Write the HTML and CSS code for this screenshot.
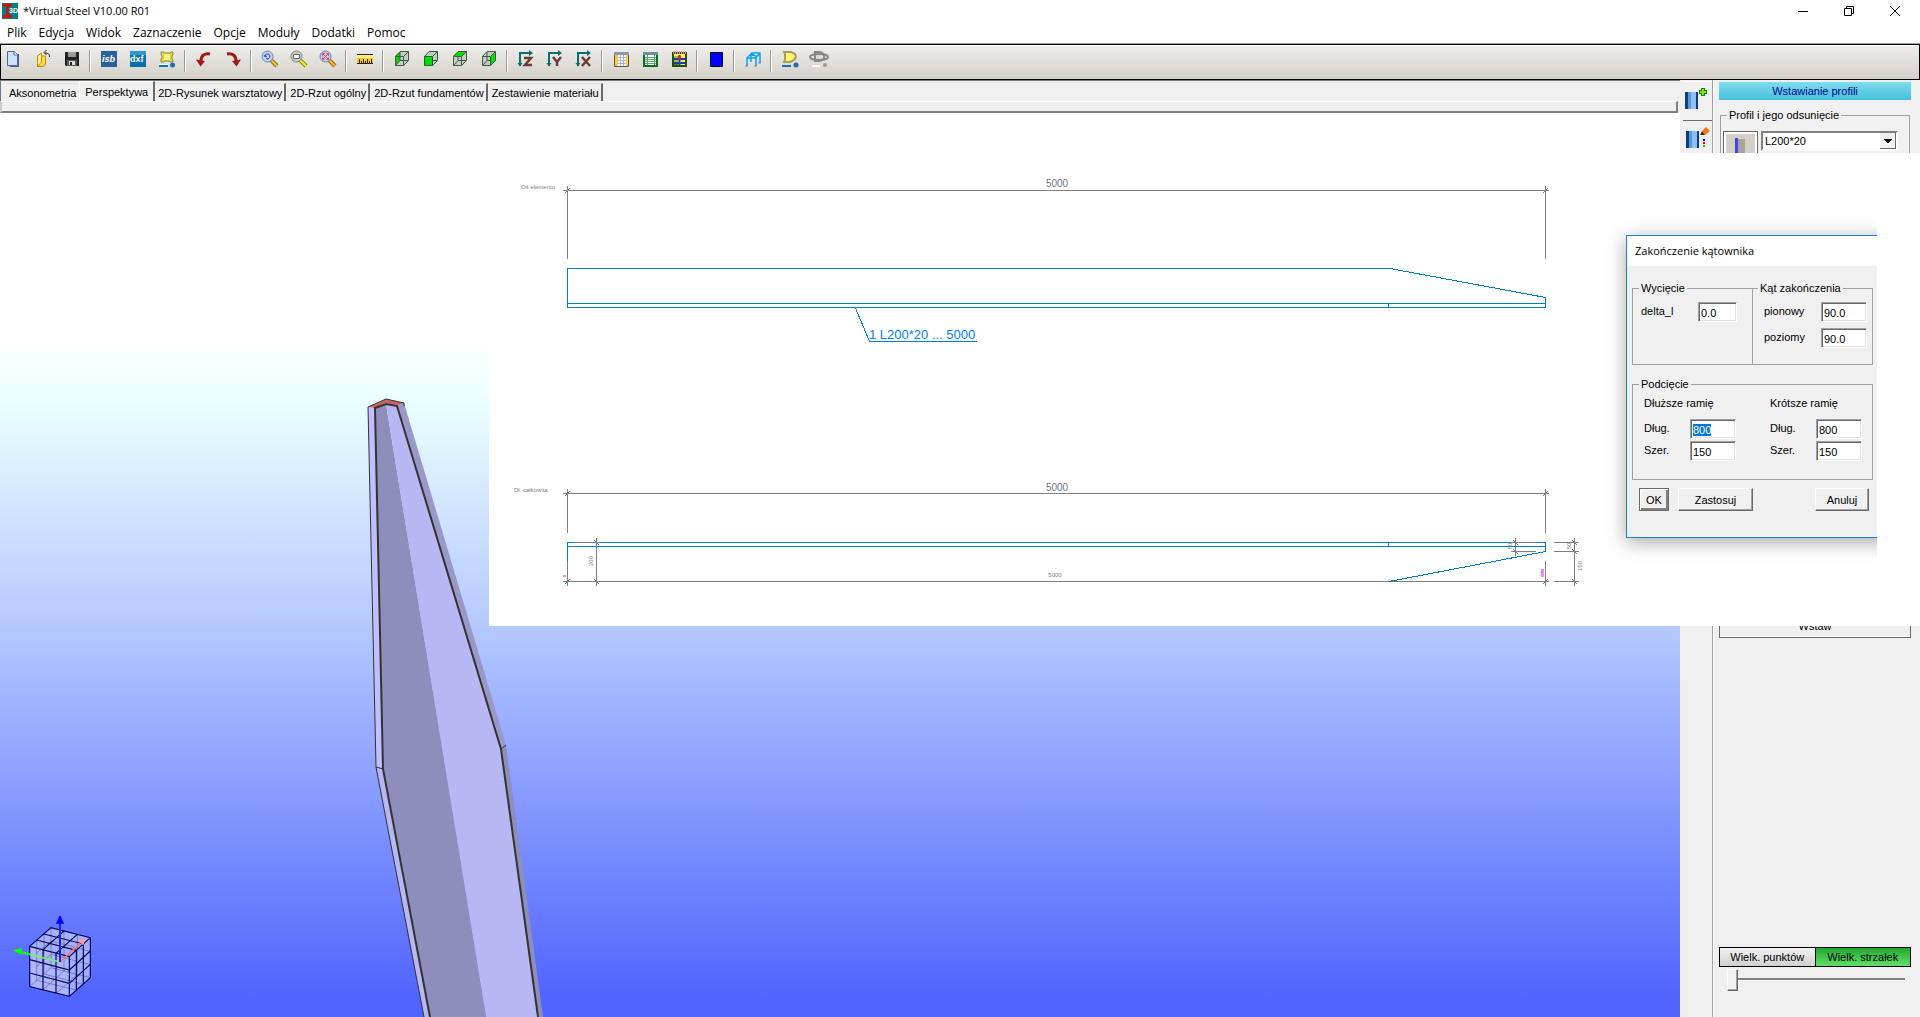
FILE: index.html
```html
<!DOCTYPE html>
<html lang="pl">
<head>
<meta charset="utf-8">
<title>*Virtual Steel V10.00 R01</title>
<link rel="stylesheet" href="styles.css">
</head>
<body>
<header class="titlebar">
  <svg class="app-icon" width="16" height="16" viewBox="0 0 16 16"><rect width="16" height="16" fill="#008080"/><path d="M1 2h9M1 13.500h9M5.500 2v11" stroke="#f00000" stroke-width="2.500"/><text x="7" y="10" class="app-mark">3D</text></svg>
  <span class="app-title">*Virtual Steel V10.00 R01</span>
  <div class="window-controls">
    <button aria-label="Minimalizuj"><svg width="10" height="10"><path d="M0 5.500h10" stroke="#000"/></svg></button>
    <button aria-label="Przywróć"><svg width="10" height="10" fill="none" stroke="#000"><path d="M.5 2.500h7v7h-7zM2.500 2.500v-2h7v7h-2"/></svg></button>
    <button aria-label="Zamknij"><svg width="10" height="10"><path d="M0 0l10 10M10 0L0 10" stroke="#000"/></svg></button>
  </div>
</header>
<nav class="menu">
  <a href="#">Plik</a><a href="#">Edycja</a><a href="#">Widok</a><a href="#">Zaznaczenie</a><a href="#">Opcje</a><a href="#">Moduły</a><a href="#">Dodatki</a><a href="#">Pomoc</a>
</nav>
<div class="toolbar">
  <button aria-label="Nowy"><svg class="ico" viewBox="0 0 20 18"><path d="M6 4h9v13H6z" fill="#555b70"/><path d="M3.500 1.500h7l3 3v11h-10z" fill="#cfe0fb" stroke="#4a68b0"/><path d="M10 1.500v3.500h3.500" fill="#fff" stroke="#4a68b0"/></svg></button>
  <button aria-label="Otwórz"><svg class="ico" viewBox="0 0 20 18"><path d="M4.500 16.500V6h8v8l-2 2.500z" fill="#ffd84a" stroke="#c58a00"/><path d="M4.500 16.500V6l4-3v9z" fill="#fff0a0" stroke="#c58a00"/><path d="M16.500 7c0-3-1-4-5-4M13.500 0l-2.500 2.500 2.500 2.500" fill="none" stroke="#222"/></svg></button>
  <button aria-label="Zapisz"><svg class="ico" viewBox="0 0 20 18"><path d="M3 2h14v14H4l-1-1z" fill="#222"/><path d="M6 2h8v5H6z" fill="#9a9a9a"/><path d="M5 10h10v6H5z" fill="#555"/><path d="M7 11h6v4H7z" fill="#ddd"/><path d="M8 12h2v3H8z" fill="#222"/></svg></button>
  <span class="sep"></span>
  <button aria-label="ISB"><svg class="ico" viewBox="0 0 20 18"><rect x="2" y="1" width="16" height="16" fill="#2c629c"/><text x="3" y="12" class="ico-text slant">isb</text></svg></button>
  <button aria-label="DXF"><svg class="ico" viewBox="0 0 20 18"><rect x="2" y="1" width="16" height="16" fill="#0b6fae"/><path d="M2 1h16v4H2z" fill="#2a9ad6"/><text x="2" y="12" class="ico-text">dxf</text></svg></button>
  <button aria-label="Obrys"><svg class="ico" viewBox="0 0 20 18"><path d="M4 2h3l1 1h5l1-1h2v3l-1 1v3l1 1v2h-3l-1-1H8l-1 1H4v-3l1-1V6L4 5z" fill="#dcd24c" stroke="#8f8b52"/><path d="M7 4h6v6H7z" fill="#fff27a"/><path d="M2 14.500h9" stroke="#fff"/><path d="M2 16h9" stroke="#1672b4" stroke-width="2"/><circle cx="15.500" cy="15" r="2.500" fill="#1672b4"/></svg></button>
  <span class="sep"></span>
  <button aria-label="Cofnij"><svg class="ico" viewBox="0 0 20 18"><path d="M16 4C10 3 7 6 7 11" fill="none" stroke="#a01818" stroke-width="3"/><path d="M2 9.500l9 1.500-4.500 5.500z" fill="#a01818"/></svg></button>
  <button aria-label="Ponów"><svg class="ico" viewBox="0 0 20 18"><path d="M4 4c6-1 9 2 9 7" fill="none" stroke="#a01818" stroke-width="3"/><path d="M18 9.500l-9 1.500 4.500 5.500z" fill="#a01818"/></svg></button>
  <span class="sep"></span>
  <button aria-label="Powiększ poprzednie"><svg class="ico" viewBox="0 0 20 18"><path d="M11 10l6 6" stroke="#8a6a10" stroke-width="4"/><path d="M11 10l6 6" stroke="#f2c935" stroke-width="2"/><circle cx="7.500" cy="6.500" r="5.500" fill="#c4d3f5" stroke="#7083b0"/><path d="M5 6a2.500 2.500 0 1 1 1 2.500M4 5l1 2 2-1" fill="none" stroke="#2444a0"/></svg></button>
  <button aria-label="Powiększ okno"><svg class="ico" viewBox="0 0 20 18"><path d="M11 10l6 6" stroke="#8a8a10" stroke-width="4"/><path d="M11 10l6 6" stroke="#f2e935" stroke-width="2"/><circle cx="7.500" cy="6.500" r="5.500" fill="#ccc" stroke="#808080"/><path d="M4.500 4.500h6v4h-6z" fill="#fff" stroke="#666"/></svg></button>
  <button aria-label="Powiększ całość"><svg class="ico" viewBox="0 0 20 18"><path d="M11 10l6 6" stroke="#a06010" stroke-width="4"/><path d="M11 10l6 6" stroke="#f2b935" stroke-width="2"/><circle cx="7.500" cy="6.500" r="5.500" fill="#bcc8ee" stroke="#7083b0"/><path d="M4.500 6V3.500H7M8.500 3.500h2V6M10.500 7.500v2h-2M6.500 9.500h-2v-2M5 4l5 5M10 4L5 9" fill="none" stroke="#e05050"/></svg></button>
  <span class="sep"></span>
  <button aria-label="Miarka"><svg class="ico" viewBox="0 0 20 18"><path d="M2 4h16v10H2z" fill="#f8c81c"/><path d="M2 4.500h16M2 13.500h16" stroke="#222"/><path d="M2 6.500h16" stroke="#fff08a" stroke-width="3"/><path d="M4.500 9v4M6.500 11v2M8.500 9v4M10.500 11v2M12.500 9v4M14.500 11v2M16.500 9v4" stroke="#332200"/></svg></button>
  <span class="sep"></span>
  <button aria-label="Widok z lewej"><svg class="ico" viewBox="0 0 20 18"><path d="M3 6l5-4h9v9l-5 5H3z" fill="#c5ccc5"/><path d="M3 6l5-4v9l-5 5z" fill="#00d800"/><path d="M3.500 6.500h8v9h-8zl4.500-5h8.500v9l-5 5M11.500 6.500l5-5M8 2v8.500h8.500M8 10.500l-4.500 5" fill="none" stroke="#445c44"/></svg></button>
  <button aria-label="Widok z przodu"><svg class="ico" viewBox="0 0 20 18"><path d="M3 6l5-4h9v9l-5 5H3z" fill="#c5ccc5"/><path d="M3.500 6.500h8v9h-8z" fill="#00e000"/><path d="M3.500 6.500h8v9h-8zl4.500-5h8.500v9l-5 5M11.500 6.500l5-5M12 10.500h4" fill="none" stroke="#2c5c2c"/></svg></button>
  <button aria-label="Widok z góry"><svg class="ico" viewBox="0 0 20 18"><path d="M3 6l5-4h9v9l-5 5H3z" fill="#c5ccc5"/><path d="M3 6l5-4h9l-5 4z" fill="#00e000"/><path d="M3.500 6.500h8v9h-8zl4.500-5h8.500v9l-5 5M11.500 6.500l5-5M8 7v3.500h8.500M8 10.500l-4.500 5" fill="none" stroke="#445c44"/></svg></button>
  <button aria-label="Widok z prawej"><svg class="ico" viewBox="0 0 20 18"><path d="M3 6l5-4h9v9l-5 5H3z" fill="#c5ccc5"/><path d="M11.500 6.500l5-5v9l-5 5z" fill="#00e000"/><path d="M3.500 6.500h8v9h-8zl4.500-5h8.500v9l-5 5M11.500 6.500l5-5M8 2v8.500h3M8 10.500l-4.500 5" fill="none" stroke="#445c44"/></svg></button>
  <span class="sep"></span>
  <button aria-label="Oś Z"><svg class="ico" viewBox="0 0 20 18"><path d="M4 16V3h11" fill="none" stroke="#087070" stroke-width="2"/><path d="M1.500 13h5L4 16.500zM13 0l4 3-4 3z" fill="#087070"/><path d="M8 8h7l-6 7h7" fill="none" stroke="#703838" stroke-width="2.500"/></svg></button>
  <button aria-label="Oś Y"><svg class="ico" viewBox="0 0 20 18"><path d="M4 16V3h11" fill="none" stroke="#087070" stroke-width="2"/><path d="M1.500 13h5L4 16.500zM13 0l4 3-4 3z" fill="#087070"/><path d="M8 7l4 5 4-5M12 11v5" fill="none" stroke="#703838" stroke-width="2.500"/></svg></button>
  <button aria-label="Oś X"><svg class="ico" viewBox="0 0 20 18"><path d="M4 16V3h11" fill="none" stroke="#087070" stroke-width="2"/><path d="M1.500 13h5L4 16.500zM13 0l4 3-4 3z" fill="#087070"/><path d="M8 7l8 9M16 7l-8 9" fill="none" stroke="#703838" stroke-width="2.500"/></svg></button>
  <span class="sep"></span>
  <button aria-label="Tabela"><svg class="ico" viewBox="0 0 20 18"><path d="M3.500 2.500h14v14h-14z" fill="#fff" stroke="#556"/><path d="M3 2h15v3H3z" fill="#8a98ac"/><path d="M4 5h3v11H4zM15 5h2v11h-2z" fill="#ffc83a"/><path d="M7 7.500h8M7 10.500h8M7 13.500h8M9.500 5v11M12.500 5v11" stroke="#a8b4d0"/></svg></button>
  <button aria-label="Arkusz"><svg class="ico" viewBox="0 0 20 18"><path d="M4 3h13v13H4z" fill="#fff" stroke="#087018" stroke-width="2"/><path d="M3 2h15v3H3z" fill="#6890a0"/><path d="M5 7.500h11M5 9.500h11M5 11.500h11M5 13.500h11M7.500 5v10M14.500 5v10" stroke="#58a868"/></svg></button>
  <button aria-label="Arkusz kolorów"><svg class="ico" viewBox="0 0 20 18"><path d="M4 3h13v13H4z" fill="#fff24a" stroke="#284818" stroke-width="2"/><path d="M4 2.500h13" stroke="#f09090" stroke-width="3" stroke-dasharray="1 1"/><path d="M5 9h11M5 13h11M10.500 5v10" stroke="#2038b0" stroke-width="2"/><path d="M9 6h3v3H9z" fill="#f02020"/><path d="M5 7h4M5 11h4M5 14.500h4" stroke="#18a030"/></svg></button>
  <span class="sep"></span>
  <button aria-label="Kolor"><svg class="ico" viewBox="0 0 20 18"><path d="M4.500 2.500h12v14h-12z" fill="#00f" stroke="#000"/></svg></button>
  <span class="sep"></span>
  <button aria-label="Konstrukcja"><svg class="ico" viewBox="0 0 20 18"><path d="M4 16V8l5-5h8v10M4 8h9l4-5M8 12V5M13 16V8M4 8l5-5 4 5M7 4.500l8 2" fill="none" stroke="#0aa4ec" stroke-width="1.500"/><path d="M2 16h3M11 16h3M15 13h3" stroke="#888"/></svg></button>
  <span class="sep"></span>
  <button aria-label="Zaznaczenie blachy"><svg class="ico" viewBox="0 0 20 18"><path d="M4 2h7l4 2 1 3-2 3-4 2H4l1-2V4z" fill="#fff27a" stroke="#a8a050" stroke-width="2"/><path d="M2 16h9" stroke="#1672b4" stroke-width="2"/><circle cx="16" cy="15" r="2.500" fill="#1672b4"/></svg></button>
  <button aria-label="Obrót blachy"><svg class="ico" viewBox="0 0 20 18"><path d="M6 2h4c7 0 7 9 0 9H6z" fill="#ddd" stroke="#888" stroke-width="2"/><ellipse cx="10" cy="7" rx="9" ry="3" fill="none" stroke="#888" stroke-width="2"/><path d="M3 16h8" stroke="#fff" stroke-width="2"/><circle cx="16" cy="15" r="2" fill="#999"/></svg></button>
</div>
<main class="workspace">
  <section class="views">
    <div class="tabs" role="tablist">
      <button class="tab" role="tab">Aksonometria</button>
      <button class="tab active" role="tab">Perspektywa</button>
      <button class="tab" role="tab">2D-Rysunek warsztatowy</button>
      <button class="tab" role="tab">2D-Rzut ogólny</button>
      <button class="tab" role="tab">2D-Rzut fundamentów</button>
      <button class="tab" role="tab">Zestawienie materiału</button>
    </div>
    <div class="tab-edge"></div>
    <div class="viewport">
      <svg class="model" width="560" height="904" viewBox="0 113 560 904">
        <path d="M368 407l7 1 8 361-7-2z" fill="#c0bfff"/>
        <path d="M376 767l7 2 47 248h-6z" fill="#b8b7f5"/>
        <path d="M375 408l11-4 100 613h-56l-47-248z" fill="#8e8ebd"/>
        <path d="M386 404l11 2 104 343 37 268h-52z" fill="#b8b7f3"/>
        <path d="M397 406l7-3 102 342-5 4z" fill="#9998c8"/>
        <path d="M501 749l5-4 37 272h-5z" fill="#8e8ebd"/>
        <path d="M368 407l18-8 18 4-7 3-11-3-11 5z" fill="#cd6263"/>
        <g fill="none" stroke="#333">
          <path d="M368 407l18-8 18 4M368 407l8 360 48 250M376 767l7 2M501 749l5-4M404 403v3"/>
          <path d="M430 1017l-47-248-8-361 11-4 11 2 104 343 37 268" stroke-width="2"/>
        </g>
      </svg>
      <svg class="orient" width="180" height="137" viewBox="0 0 540 411">
        <path d="M89 199L153 143 271 173V293L208 349 89 320z" fill="#dfe4ff" fill-opacity=".55"/>
        <path d="M89 199l119 31v119L89 320z" fill="#fff" fill-opacity=".12"/>
        <g fill="none" stroke="#7780b8" stroke-width="3"><path d="M153 143V263L89 320M153 263l118 30M132 162v120l118 31M110 181v120l119 29M192 153v120l-63 56M232 163v120l-63 57M110 259l43-36 118 31M110 219l43-36 118 31"/></g>
        <g fill="none" stroke="#00005c" stroke-width="3.500">
          <path d="M89 199L153 143 271 173V293L208 349 89 320zL208 230 271 173M208 230V349M129 209V330M168 220V340M229 211V330M250 192V312M89 239l119 31 63-57M89 279l119 31 63-57M129 209l63-56M168 220l64-57M229 211L110 180M250 192L132 162"/>
        </g>
        <path d="M180 246L240 190" stroke="#ff7068" stroke-width="5"/><path d="M256 177l-24 5 18 14z" fill="#ff9c98"/>
        <path d="M180 246L66 217" stroke="#70f070" stroke-width="5"/><path d="M38 211l28-7-2 20z" fill="#00ff00"/><path d="M90 223L60 216" stroke="#00ff00" stroke-width="5"/>
        <path d="M180 246V130" stroke="#2020f0" stroke-width="6"/><path d="M168 131h24l-10-23h-4z" fill="#0000ff"/>
      </svg>
    </div>
  </section>
  <aside class="side">
    <div class="side-tabs">
      <button aria-label="Wstaw profil" class="side-tab active"><svg width="26" height="24" viewBox="0 0 26 24"><path d="M1 5h13v17H1z" fill="#8ec0f8"/><path d="M1 5h3v17H1zM12 5h2v17h-2z" fill="#10407c"/><path d="M4 5h3v17H4z" fill="#5898e0"/><path d="M19 1v8M15 5h8" stroke="#208018" stroke-width="4"/><path d="M19 2v6M16 5h6" stroke="#70f010" stroke-width="2"/></svg></button>
      <button aria-label="Edytuj profil" class="side-tab"><svg width="26" height="24" viewBox="0 0 26 24"><path d="M2 5h13v17H2z" fill="#8ec0f8"/><path d="M2 5h3v17H2zM13 5h2v17h-2z" fill="#10407c"/><path d="M5 5h3v17H5z" fill="#5898e0"/><path d="M18 5l4-4 4 4-5 4z" fill="#f07818"/><path d="M16 9l2-4 3 4z" fill="#402818"/><path d="M19 13h2v2h-2z" fill="#00f"/><path d="M19 16h2v2h-2z" fill="#f00"/><path d="M19 19h2v2h-2z" fill="#0d0"/></svg></button>
    </div>
    <div class="panel">
      <h2 class="panel-title">Wstawianie profili</h2>
      <fieldset class="profile">
        <legend>Profil i jego odsunięcie</legend>
        <div class="profile-row">
          <button class="profile-pick" aria-label="Wybierz profil"><svg width="29" height="29"><rect width="29" height="29" fill="#d4d0c8"/><path d="M12 5h7v24h-7z" fill="#a8a49c"/><path d="M9 4h3v25H9z" fill="#4040ff"/></svg></button>
          <select aria-label="Profil"><option>L200*20</option></select>
        </div>
      </fieldset>
      <button class="insert">Wstaw</button>
      <div class="sizes">
        <div class="toggle"><button>Wielk. punktów</button><button class="on">Wielk. strzałek</button></div>
        <input type="range" min="0" max="100" value="0" aria-label="Wielkość strzałek">
      </div>
    </div>
  </aside>
</main>
<section class="sheet">
  <svg width="1120" height="473" viewBox="489 153 1120 473">
    <g fill="none" stroke="#808080" shape-rendering="crispEdges">
      <path d="M563 190.500h986M567.500 186v73M1545.500 186v73M563 493.500h986M567.500 489v44M1545.500 489v44"/>
      <path d="M563 581.500h986M567.500 561v25M596.500 538v48M574 542.500h26M1545.500 561v25M1515.500 538v18M1511 542.500h25M1511 551.500h25M1574.500 538v48M1554 542.500h25M1554 551.500h25M1554 581.500h25"/>
      <path d="M565 193l5-5M1543 193l5-5M565 496l5-5M1543 496l5-5M565 584l5-5M1543 584l5-5M594 540l5 5M594 579l5 5M1513 540l5 5M1513 549l5 5M1572 540l5 5M1572 549l5 5M1572 579l5 5"/>
    </g>
    <g fill="none" stroke="#0080c0" shape-rendering="crispEdges">
      <path d="M567.500 307.500v-39H1390l155.500 29v10zM567 303.500h978M1388.500 303v4"/>
      <path d="M567.500 561v-18.500H574M600 542.500h911M1536 542.500h9.500v9L1389 581.500M567 546.500h978M1388.500 542v4"/>
    </g>
    <path d="M855.500 308l14 33.500H977" fill="none" stroke="#0080ff" shape-rendering="crispEdges"/>
    <text x="869" y="339" class="part">1 L200*20 ... 5000</text>
    <text x="1057" y="187" class="dim mid">5000</text>
    <text x="1057" y="491" class="dim mid">5000</text>
    <text x="521" y="189" class="tiny">Oś elementu</text>
    <text x="514" y="492" class="tiny">Dł. całkowita</text>
    <text x="1055" y="577" class="tiny mid">5000</text>
    <text transform="translate(593 561) rotate(-90)" class="tiny mid">200</text>
    <text transform="translate(1512 546) rotate(-90)" class="tiny mid">50</text>
    <text transform="translate(1571 546) rotate(-90)" class="tiny mid">50</text>
    <text transform="translate(1582 566) rotate(-90)" class="tiny mid">150</text>
    <path d="M563 575h3v2h-3zM1541 569h3v8h-3z" fill="#ff80ff"/>
  </svg>
  <div class="dialog-clip">
    <form class="dialog">
      <div class="dialog-title">Zakończenie kątownika</div>
      <div class="dialog-body">
        <div class="pair">
          <fieldset class="cut"><legend>Wycięcie</legend>
            <label for="dl">delta_l</label><input id="dl" value="0.0">
          </fieldset>
          <fieldset class="angle"><legend>Kąt zakończenia</legend>
            <label for="pion">pionowy</label><input id="pion" value="90.0">
            <label for="poz">poziomy</label><input id="poz" value="90.0">
          </fieldset>
        </div>
        <fieldset class="undercut"><legend>Podcięcie</legend>
          <div class="arm"><h3>Dłuższe ramię</h3>
            <label for="d1">Dług.</label><input id="d1" value="800">
            <label for="s1">Szer.</label><input id="s1" value="150">
          </div>
          <div class="arm"><h3>Krótsze ramię</h3>
            <label for="d2">Dług.</label><input id="d2" value="800">
            <label for="s2">Szer.</label><input id="s2" value="150">
          </div>
        </fieldset>
        <div class="actions"><button type="button" class="btn default">OK</button><button type="button" class="btn apply">Zastosuj</button><button type="button" class="btn cancel">Anuluj</button></div>
      </div>
    </form>
  </div>
</section>
<script>
  const field = document.getElementById('d1');
  field.focus({ preventScroll: true });
  field.select();
</script>
</body>
</html>
```
FILE: styles.css
```css
* { box-sizing: border-box; }
body {
  margin: 0; height: 100vh; position: relative; overflow: hidden;
  display: flex; flex-direction: column; background: #fff; color: #000;
  font: 12px/16px "Liberation Sans", Arial, sans-serif;
}
button, input, select { font: inherit; color: inherit; margin: 0; padding: 0; border: 0; border-radius: 0; background: none; }
svg { display: block; }
fieldset { margin: 0; padding: 0; min-width: 0; border: 1px solid #a0a0a0; }
legend { padding: 0 2px; margin-left: 6px; }
h2, h3 { margin: 0; font: inherit; }

.titlebar { flex: none; height: 22px; display: flex; align-items: center; padding-left: 2px; }
.app-title { margin-left: 5px; font: 11px/16px "Open Sans", sans-serif; }
.app-mark { font: bold 7px "Liberation Sans", sans-serif; fill: #fff; }
.window-controls { margin-left: auto; display: flex; height: 100%; margin-right: 2px; }
.window-controls button { width: 46px; display: flex; align-items: center; justify-content: center; }

.menu { flex: none; height: 21px; display: flex; gap: 12px; padding: 3px 7px 0; font: 12px/16px "Open Sans", sans-serif; }
.menu a { color: inherit; text-decoration: none; }

.toolbar {
  flex: none; height: 36px; display: flex; align-items: flex-start; padding-top: 5px;
  margin-top: 1px; border: 1px solid #000; outline: 1px solid #a0a0a0; box-shadow: inset 0 1px #fff;
  background: linear-gradient(#efeeeb, #d4d0c8);
}
.toolbar button { width: 29px; height: 18px; display: flex; justify-content: center; }
.toolbar button:first-child { margin-left: -2px; }
.ico { width: 20px; height: 18px; }
.ico-text { font: bold 9px "Liberation Sans", sans-serif; fill: #fff; }
.slant { font-style: italic; }
.sep { width: 8px; height: 22px; background: linear-gradient(90deg, transparent 3px, #999 3px 4px, #fff 4px 5px, transparent 5px); }

.workspace { flex: 1; min-height: 0; display: flex; background: #f0f0f0; }
.views { flex: 1; min-width: 0; display: flex; flex-direction: column; }
.tabs { height: 21px; display: flex; align-items: flex-end; padding-left: 4px; border-top: 1px solid #777; border-left: 1px solid #777; }
.tab { height: 18px; padding: 0 2px 0 3px; font-size: 11px; line-height: 18px; border-top: 1px solid #e4e4e4; border-right: 2px solid #696969; margin-right: 1px; white-space: nowrap; }
.tab.active { height: 20px; padding: 0 5px; border-top-color: #fff; border-left: 1px solid #fff; margin-right: 0; }
.tab:first-child { padding-left: 4px; border-right: 0; }
.tab-edge { height: 12px; margin-right: 2px; border-top: 1px solid #fff; border-bottom: 2px solid #808080; border-right: 2px solid #808080; border-left: 2px solid #ccc; }
.viewport { flex: 1; min-height: 0; position: relative; overflow: hidden; background: linear-gradient(#fff 0, #fff 25%, #eaffff 32%, #b4c8ff 57%, #5064ff 98%); }
.model { position: absolute; left: 0; top: 0; }
.orient { position: absolute; left: 0; bottom: 0; }

.side { flex: none; width: 240px; display: flex; }
.side-tabs { width: 33px; border-right: 1px solid #a0a0a0; padding: 1px 0 0 3px; }
.side-tab { width: 29px; height: 39px; display: flex; padding: 5px 0 0 1px; border-top: 1px solid #fff; }
.side-tab + .side-tab { border-top-color: #696969; }
.panel { flex: 1; display: flex; flex-direction: column; padding: 2px 9px 26px 5px; border-left: 1px solid #fff; font-size: 11px; }
.panel-title { height: 18px; line-height: 18px; text-align: center; color: #000090; background: linear-gradient(#7fdcee, #44c0da); }
.profile { margin: 7px 1px 0; height: 499px; }
.profile-row { display: flex; gap: 3px; padding: 8px 11px 0 2px; }
.profile-pick { width: 35px; height: 35px; padding: 2px; border: 1px solid #696969; background: #fff; }
.profile select {
  flex: 1; height: 20px; padding: 0 2px; appearance: none;
  border: 2px solid; border-color: #808080 #fff #fff #808080;
  background-color: #fff;
  background-image: linear-gradient(45deg, transparent 50%, #000 50%), linear-gradient(-45deg, transparent 50%, #000 50%), linear-gradient(#696969, #696969), linear-gradient(#696969, #696969), linear-gradient(#f0f0f0, #f0f0f0);
  background-position: right 8px top 6px, right 4px top 6px, right 0 top 0, right 0 bottom 0, right 0 top 0;
  background-size: 4px 4px, 4px 4px, 1px 100%, 16px 1px, 16px 100%;
  background-repeat: no-repeat;
  background-position: right 8px top 6px, right 4px top 6px, right 0 top 0, right 0 bottom 0, right 0 top 0;
}
.insert { margin-top: 7px; height: 25px; border: 1px solid #696969; box-shadow: inset 0 -1px #fff; }
.sizes { margin-top: auto; }
.toggle { display: flex; height: 20px; border: 1px solid #000; }
.toggle button { flex: 1; background: linear-gradient(#f2f2f2, #d0d0d0); }
.toggle .on { border-left: 1px solid #000; background: linear-gradient(#22a832, #62e068); }
input[type=range] {
  display: block; appearance: none; width: calc(100% - 14px); height: 22px; margin: 2px 6px 0 8px;
  background: linear-gradient(#808080, #808080) 0 9px / 100% 2px no-repeat, linear-gradient(#fff, #fff) 0 11px / 100% 1px no-repeat;
}
input[type=range]::-webkit-slider-thumb {
  appearance: none; width: 11px; height: 22px; background: #f0f0f0;
  border: 1px solid; border-color: #fff #696969 #696969 #fff; box-shadow: inset -1px -1px #a0a0a0;
}

.sheet { position: absolute; left: 489px; right: 0; top: 153px; height: 473px; background: #fff; }
.part { font-size: 13px; fill: #0080ff; }
.dim { font-size: 10px; fill: #707880; }
.tiny { font-size: 6px; fill: #808080; }
.mid { text-anchor: middle; }

.dialog-clip { position: absolute; right: 43px; top: 52px; width: 281px; height: 370px; padding: 30px 0 0 30px; overflow: hidden; }
.dialog { width: 300px; height: 303px; border: 1px solid #1a80d8; background: #f0f0f0; box-shadow: 0 4px 18px rgba(0, 0, 0, .35); font-size: 11px; }
.dialog-title { height: 30px; padding-left: 8px; background: #fff; font: 11px/30px "Open Sans", sans-serif; }
.dialog-body { padding: 14px 52px 0 5px; display: flex; flex-direction: column; }
.pair { display: flex; height: 85px; }
.pair fieldset { height: 85px; }
.cut { flex: none; width: 121px; }
.angle { flex: 1; margin-left: -1px; }
.dialog input { width: 46px; height: 20px; padding: 1px 2px 0; background: #fff; border: 1px solid; border-color: #a0a0a0 #fff #fff #a0a0a0; box-shadow: inset 1px 1px #696969, inset -1px -1px #e3e3e3; outline: 0; }
.cut { display: grid; grid-template-columns: 57px 39px; padding: 6px 0 0 8px; align-content: start; }
.cut legend { margin-left: -2px; }
.cut input { width: 39px; }
.angle { display: grid; grid-template-columns: 57px 46px; grid-auto-rows: 20px; row-gap: 6px; padding: 6px 0 0 11px; }
.angle legend { margin-left: -6px; }
.cut label, .angle label, .arm label { line-height: 18px; }
.undercut { display: grid; grid-template-columns: 126px 1fr; height: 104px; margin-top: 11px; }
.arm { display: grid; grid-template-columns: 46px 46px; grid-template-rows: 22px 20px 20px; row-gap: 2px; padding: 3px 0 0 11px; align-content: start; }
.arm h3 { grid-column: 1 / 3; }
.arm ::selection { background: #0078d7; color: #fff; }
.actions { display: flex; margin: 8px 4px 0 7px; }
.btn { height: 23px; border: 1px solid; border-color: #fff #696969 #696969 #fff; box-shadow: inset -1px -1px #a0a0a0; }
.btn.default { width: 30px; border: 1px solid #696969; box-shadow: inset 1px 1px #fff, inset -2px -2px #808080; }
.btn.apply { width: 75px; margin-left: 9px; }
.btn.cancel { width: 54px; margin-left: auto; }
```
